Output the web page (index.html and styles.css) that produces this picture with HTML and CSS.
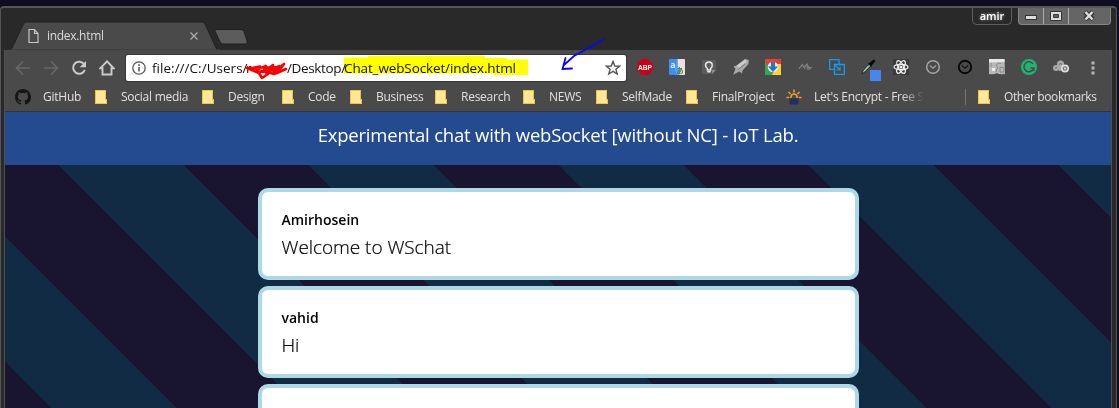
FILE: index.html
```html
<!DOCTYPE html>
<html lang="en">
<head>
<meta charset="utf-8">
<title>index.html</title>
<link rel="stylesheet" href="styles.css">
</head>
<body>
<svg width="0" height="0" class="defs">
  <symbol id="folder" viewBox="0 0 12 14"><path d="M0 0H11V9H12V14H0Z" fill="#e9c550"/><path d="M1 1H10V13H1Z" fill="#ffe795"/><path d="M10 10H11V13H10Z" fill="#ffe795"/></symbol>
</svg>
<div class="window">
  <header class="tabstrip">
    <svg class="tabs" width="260" height="42" viewBox="0 0 260 42">
      <path d="M7 42 19.500 16Q20.500 14 22 14H198Q200 14 201 16L213 42Z" fill="#4a4a4a" stroke="#202020"/>
      <path d="M6 41.500H216V42H6Z" fill="#4a4a4a"/>
      <path d="M211 21.500H237Q239 21.500 240 23.500L243 33Q244 36 241.500 36H219Q217 36 216 34L211 23Z" fill="#5c5c5c" stroke="#1f1f1f"/>
      <path d="M25 21.500H30.500L34 25.500V34.500H25ZM30.500 21.500V25.500H34" fill="none" stroke="#c6c6c6" stroke-width="1.200"/>
      <path d="M186.500 24.500 193.500 31.500M193.500 24.500 186.500 31.500" stroke="#aaa" stroke-width="1.300"/>
    </svg>
    <span class="tab-title">index.html</span>
    <div class="user">amir</div>
    <div class="controls">
      <span><svg width="24" height="17"><rect x="6.500" y="7.500" width="11" height="4" fill="#ddd" stroke="#333"/></svg></span>
      <span><svg width="24" height="17"><path d="M6.500 3.500H17.500V12.500H6.500ZM9.500 6.500V9.500H14.500V6.500Z" fill="#ddd" fill-rule="evenodd" stroke="#333"/></svg></span>
      <span><svg width="41" height="17"><path d="M16 4 24 11.500M24 4 16 11.500" stroke="#333" stroke-width="4.500"/><path d="M16.500 4 23.500 11.500M23.500 4 16.500 11.500" stroke="#ddd" stroke-width="2.500"/></svg></span>
    </div>
  </header>

  <div class="chrome">
    <div class="toolbar">
      <div class="nav">
        <svg viewBox="0 0 16 16"><path d="M15 8H2M8 1.500 1.500 8 8 14.500" fill="none" stroke="#686868" stroke-width="1.700"/></svg>
        <svg viewBox="0 0 16 16"><path d="M1 8H14M8 1.500 14.500 8 8 14.500" fill="none" stroke="#686868" stroke-width="1.700"/></svg>
        <svg viewBox="0 0 16 16"><path d="M13.200 4.500A6 6 0 1 0 13.800 9.800" fill="none" stroke="#ccc" stroke-width="2"/><path d="M15 1V7.300H8.700Z" fill="#ccc"/></svg>
        <svg viewBox="0 0 16 16"><path d="M8 1.300 1.300 8.300H3.500V14.500H12.500V8.300H14.700Z" fill="none" stroke="#ccc" stroke-width="1.900"/></svg>
      </div>
      <div class="omnibox">
        <svg class="info" viewBox="0 0 14 14"><circle cx="7" cy="7" r="6.200" fill="none" stroke="#555" stroke-width="1.300"/><path d="M7 6V10.500M7 3.300V4.900" stroke="#555" stroke-width="1.600"/></svg>
        <span class="url u1">file:///C:/Users/</span><span class="url u2">r&nbsp;</span><span class="url u3">/Desktop/</span><span class="url u4">Chat_webSocket/index.html</span>
        <svg class="star" viewBox="0 0 16 16"><path d="M8 1.500 9.800 6 14.600 6.200 10.900 9.300 12.200 14 8 11.300 3.800 14 5.100 9.300 1.400 6.200 6.200 6Z" fill="none" stroke="#555" stroke-width="1.400"/></svg>
      </div>
      <div class="extensions">
        <svg viewBox="0 0 16 16"><path d="M5 0H11L16 5V11L11 16H5L0 11V5Z" fill="#cb0018"/><text x="8" y="10.900" class="abp" textLength="14" lengthAdjust="spacingAndGlyphs">ABP</text></svg>
        <svg viewBox="0 0 16 16"><path d="M0 1Q0 0 1 0H9L11 16H1Q0 16 0 15Z" fill="#3d8df2"/><path d="M8.500 0H15Q16 0 16 1V15Q16 16 15 16H9Z" fill="#f0dfe0"/><path d="M8 0 10.500 16H8L6 10Z" fill="#5ba1f7"/><text x="1.200" y="8.700" class="tr-a">a</text><text x="7.600" y="14.200" class="tr-j">あ</text></svg>
        <svg viewBox="0 0 16 16"><path d="M1 1H15V11L11 15H1Z" fill="#5c5c5c"/><path d="M15 11H11V15Z" fill="#8c8c8c"/><path d="M6.300 9.300C3.200 7 4.500 3 8 3S12.400 7 9.700 9.300V11H6.300ZM6.300 12.800H9.700" fill="none" stroke="#eee" stroke-width="1.400"/></svg>
        <svg viewBox="0 0 16 16"><path d="M15.800 1 12 0 3.500 6.500.5 7.500 2.500 10 0 15.800 6.300 12.500 9 14.500 9.500 11.500 15.500 5Z" fill="#a9a9a9"/><path d="M12 .5 3.500 7 6 9 14 2.500Z" fill="#ccc"/><path d="M5 10.500 12 5" stroke="#777"/></svg>
        <svg viewBox="0 0 16 16"><path d="M0 0H16V16H0Z" fill="#ed3b36"/><path d="M0 2 8 16H0Z" fill="#31a852"/><path d="M16 5V16H7L12 5Z" fill="#ffd132"/><circle cx="8" cy="8" r="5.300" fill="#dcebf5"/><path d="M6 3H10V7.500H13L8 13 3 7.500H6Z" fill="#2878b8"/></svg>
        <svg viewBox="0 0 16 16"><path d="M2 9.500 5.500 5.500 8 10 7 8.500 10 5 11.500 8.500 10 10.500M9 8 14 8.700 11.500 10.500" fill="none" stroke="#858585" stroke-width="1.200"/></svg>
        <svg viewBox="0 0 16 16"><path d="M10 5.500V.7H.7V10.300H5.500M5.500 5.500H15.300V15.300H5.500Z" fill="none" stroke="#169aef" stroke-width="1.300"/><path d="M5 5 11 11M11 7.500V11H7.500" fill="none" stroke="#169aef" stroke-width="1.200"/></svg>
        <svg viewBox="0 0 20 18"><path d="M1 15 2 12 8 5 10 7 4 13Z" fill="#659b6c" stroke="#222" stroke-width=".8"/><path d="M2.500 12.500 7.500 7" stroke="#ddd"/><path d="M7 4 9 3.800 11.500 1.200Q13-.2 14 1T13.300 3.500L11 6 10.500 8Z" fill="#080808"/><path d="M9 11H20V22H9Z" fill="#4587f0"/></svg>
        <svg viewBox="0 0 16 16"><path d="M0 0H16V16H0Z" fill="#393939"/><g fill="none" stroke="#eee" stroke-width="1.300"><ellipse cx="8" cy="8" rx="7" ry="2.700"/><ellipse cx="8" cy="8" rx="7" ry="2.700" transform="rotate(60 8 8)"/><ellipse cx="8" cy="8" rx="7" ry="2.700" transform="rotate(120 8 8)"/></g><circle cx="8" cy="8" r="1.500" fill="#fff"/></svg>
        <svg viewBox="0 0 16 16"><circle cx="8" cy="8" r="6.300" fill="none" stroke="#a5a5a5" stroke-width="1.500"/><path d="M4.800 6.500 8 9.300 11.200 6.500" fill="none" stroke="#a5a5a5" stroke-width="1.200"/></svg>
        <svg viewBox="0 0 16 16"><circle cx="8" cy="8" r="6.200" fill="none" stroke="#080808" stroke-width="1.900"/><path d="M4.800 6.500 8 9.300 11.200 6.500" fill="none" stroke="#111" stroke-width="1.200"/></svg>
        <svg viewBox="0 0 16 16"><path d="M0 0H15.500L16 15Q10 16 8 14 5 16 0 15Z" fill="#b9b9b9"/><path d="M0 0H15.500V3L0 3.500Z" fill="#e8e8e8"/><path d="M2 4V8M7 7 9 4 12 4.500M9 7 7 13M11 8V13H15V9Z" fill="none" stroke="#888"/><path d="M3 9H6V12H3Z" fill="#eee"/></svg>
        <svg viewBox="0 0 16 16"><circle cx="8" cy="8" r="8" fill="#20b574"/><path d="M12 4.800A5 5 0 1 0 12.800 9H9.500M12.800 8.500V12" fill="none" stroke="#4a4a4a" stroke-width="1.600"/></svg>
        <svg viewBox="0 0 16 16"><g fill="#aaa"><circle cx="3" cy="9" r="3"/><circle cx="7.500" cy="5" r="3.500"/><circle cx="7" cy="10" r="2"/></g><path d="M6 5.500Q7.500 3.500 9 5.500M2 9.500Q3 8 4 9" fill="none" stroke="#666"/><circle cx="12" cy="9.500" r="3.200" fill="#777" stroke="#ddd" stroke-width="1.700"/><circle cx="12" cy="9.500" r="1.100" fill="#ddd"/></svg>
      </div>
      <svg class="menu" viewBox="0 0 4 14"><path d="M.5.500h3v3h-3zM.5 5.500h3v3h-3zM.5 10.500h3v3h-3z" fill="#b5b5b5"/></svg>
    </div>

    <nav class="bookmarks">
      <a><svg class="site" viewBox="0 0 16 16"><path fill="#151515" d="M8 0C3.580 0 0 3.580 0 8c0 3.540 2.290 6.530 5.470 7.590.4.070.55-.17.55-.38v-1.490c-2.010.37-2.530-.49-2.690-.94-.09-.23-.48-.94-.82-1.130-.28-.15-.68-.52-.01-.53.63-.01 1.080.58 1.230.82.72 1.210 1.870.87 2.330.66.070-.52.28-.87.510-1.070-1.780-.2-3.640-.89-3.640-3.950 0-.87.31-1.590.82-2.150-.08-.2-.36-1.020.08-2.120 0 0 .67-.21 2.200.82a7.600 7.600 0 0 1 4 0c1.530-1.040 2.200-.82 2.200-.82.44 1.100.16 1.920.08 2.120.51.560.82 1.270.82 2.150 0 3.070-1.870 3.750-3.650 3.950.29.250.54.730.54 1.480v2.200c0 .21.15.46.55.38A8 8 0 0 0 16 8c0-4.420-3.580-8-8-8z"/></svg><span>GitHub</span></a>
      <a><svg><use href="#folder"/></svg><span>Social media</span></a>
      <a><svg><use href="#folder"/></svg><span>Design</span></a>
      <a><svg><use href="#folder"/></svg><span>Code</span></a>
      <a><svg><use href="#folder"/></svg><span>Business</span></a>
      <a><svg><use href="#folder"/></svg><span>Research</span></a>
      <a><svg><use href="#folder"/></svg><span>NEWS</span></a>
      <a><svg><use href="#folder"/></svg><span>SelfMade</span></a>
      <a><svg><use href="#folder"/></svg><span>FinalProject</span></a>
      <a><svg class="site" viewBox="0 0 16 16"><path d="M8 .5V3.500M2.500 3 4.500 5M13.500 3 11.500 5M.5 8.500H3.300M12.700 8.500H15.500" stroke="#f49b22" stroke-width="1.600"/><path d="M5 9V8A3 3 0 0 1 11 8V9" fill="none" stroke="#f49b22" stroke-width="1.700"/><path d="M3.500 9.500H12.500V15.500H3.500Z" fill="#1d3261"/></svg><span class="fade">Let's Encrypt - Free S</span></a>
      <a class="other"><svg><use href="#folder"/></svg><span>Other bookmarks</span></a>
    </nav>

    <main class="page">
      <h1>Experimental chat with webSocket [without NC] - IoT Lab.</h1>
      <section class="messages">
        <article><h2>Amirhosein</h2><p>Welcome to WSchat</p></article>
        <article><h2>vahid</h2><p>Hi</p></article>
        <article></article>
      </section>
    </main>
  </div>
</div>
<svg class="marks highlighter" width="1119" height="112">
  <path d="M344 57.500H368V56H485V58H507V59.500H528V75H493V73.500H344Z" fill="#ff0"/>
</svg>
<svg class="marks" width="1119" height="112">
  <path d="M247 69 260 66.500 256 70 266 66 263 72 273 65 267 73 279 66 274 72 284 64 277 73 286 69 274 74 264 71 268 74 262 78 259 73 247 68 281 67 258 72 277 70" fill="none" stroke="#fb0000" stroke-width="2.600" stroke-linejoin="round"/>
  <path d="M603.500 39.500 585 50 574 56 564 65M565.500 58 562.500 69 572 68.500" fill="none" stroke="#0808f0" stroke-width="1.800" stroke-linecap="round"/>
</svg>
</body>
</html>
```
FILE: styles.css
```css
* { box-sizing: border-box; }
body {
  margin: 0;
  width: 1119px;
  height: 408px;
  overflow: hidden;
  background: #0e0c20;
  font-family: "Open Sans", "Noto Sans", sans-serif;
  position: relative;
}
svg { display: block; flex: none; }
.defs { position: absolute; }
.window {
  margin-top: 6px;
  width: 1117px;
  height: 402px;
  padding: 0 4px 0 3px;
  background: #292929;
  border: 1px solid #555;
  border-top-width: 2px;
  border-bottom: 0;
  border-radius: 4px 4px 0 0;
}
.tabstrip { display: flex; height: 42px; }
.tabs { margin-top: 0; }
.tab-title {
  margin: 20px 0 0 -217px;
  width: 924px;
  font-size: 12px;
  line-height: 16px;
  color: #d9d9d9;
  letter-spacing: -.45px;
}
.tab-title { letter-spacing: -.3px; }
.user {
  width: 40px;
  height: 17px;
  border: 1px solid #606060;
  border-top: 0;
  border-radius: 0 0 5px 5px;
  color: #fff;
  font-size: 11px;
  font-weight: 600;
  line-height: 15px;
  text-align: center;
  margin-left: 1px;
  text-shadow: 0 0 3px #aaa;
}
.controls {
  display: flex;
  width: 93px;
  height: 17px;
  margin-left: 6px;
  background: #656565;
  border: 1px solid #858585;
  border-top: 0;
  border-radius: 0 0 4px 4px;
}
.controls span + span { border-left: 1px solid #aaa; }
.chrome { border: 1px solid #505050; border-top: 0; background: #4a4a4a; height: 358px; }
.toolbar { height: 36px; display: flex; align-items: center; padding-left: 10px; }
.nav { display: flex; gap: 12px; width: 111px; }
.nav svg { width: 16px; height: 16px; }
.omnibox {
  width: 500px;
  height: 26px;
  background: #fff;
  border-radius: 2px;
  display: flex;
  align-items: center;
  padding-left: 6px;
  box-shadow: 0 0 0 1px #363636;
}
.info { width: 14px; height: 14px; margin-right: 6px; }
.url { font-size: 13.5px; line-height: 20px; white-space: pre; color: #111; flex: none; }
.u1 { width: 94px; letter-spacing: .03px; }
.u2 { width: 41px; }
.u3 { width: 57px; letter-spacing: -.35px; }
.u4 { width: 261px; letter-spacing: -.12px; }
.star { width: 16px; height: 16px; }
.extensions { display: flex; gap: 16px; margin-left: 11px; }
.extensions svg { width: 16px; height: 16px; overflow: visible; }
.extensions svg:nth-child(8) { width: 20px; height: 18px; margin-right: -4px; }
.abp { font: bold 7.5px "Liberation Sans", sans-serif; fill: #fff; text-anchor: middle; }
.tr-a { font: bold 9px "Open Sans", sans-serif; fill: #dff0ff; }
.tr-j { font: bold 7px "Noto Sans CJK JP", sans-serif; fill: #35833c; }
.menu { width: 4px; height: 14px; margin-left: 22px; }
.bookmarks {
  height: 26px;
  padding-bottom: 3px;
  border-bottom: 1px solid #343434;
  display: grid;
  grid-template-columns: 80px 107px 80px 68px 85px 88px 73px 90px 100px 179px 140px;
  align-items: center;
  padding-left: 10px;
  font-size: 12px;
  line-height: 16px;
  color: #e0e0e0;
}
.bookmarks a { display: flex; align-items: center; white-space: nowrap; letter-spacing: -.25px; }
.bookmarks svg { width: 12px; height: 14px; margin-right: 14px; }
.bookmarks svg.site { width: 16px; height: 16px; margin-right: 12px; }
.bookmarks .fade {
  width: 110px;
  overflow: hidden;
  -webkit-mask-image: linear-gradient(90deg, #000 80%, transparent);
  mask-image: linear-gradient(90deg, #000 80%, transparent);
}
.bookmarks .other { border-left: 1px solid #777; padding-left: 12px; letter-spacing: -.4px; }
.page {
  height: 296px;
  overflow: hidden;
  background: #191530;
}
h1 {
  margin: 0;
  height: 53px;
  background: #244a8f;
  color: #fff;
  font-size: 18.5px;
  font-weight: 400;
  line-height: 46px;
  text-align: center;
  letter-spacing: -.2px;
  white-space: nowrap;
}
.messages {
  height: 243px;
  padding-top: 23px;
  display: flex;
  flex-direction: column;
  align-items: center;
  gap: 6px;
  background: linear-gradient(45deg, #102b43 25%, #191530 25%, #191530 50%, #102b43 50%, #102b43 75%, #191530 75%) 53px 0 / 250px 250px;
}
article {
  flex: none;
  width: 601px;
  height: 92px;
  padding: 18px 20px;
  border: 4px solid #add8e6;
  border-radius: 10px;
  background: #fff;
  color: #000;
}
h2 { margin: 0; font-size: 14px; line-height: 20px; font-weight: 600; letter-spacing: 0; }
article p { margin: 3px 0 0; font-size: 19px; line-height: 28px; font-weight: 300; letter-spacing: -.05px; -webkit-text-stroke: .2px #000; }
.marks { position: absolute; left: 0; top: 0; }
.highlighter { mix-blend-mode: multiply; }
```
